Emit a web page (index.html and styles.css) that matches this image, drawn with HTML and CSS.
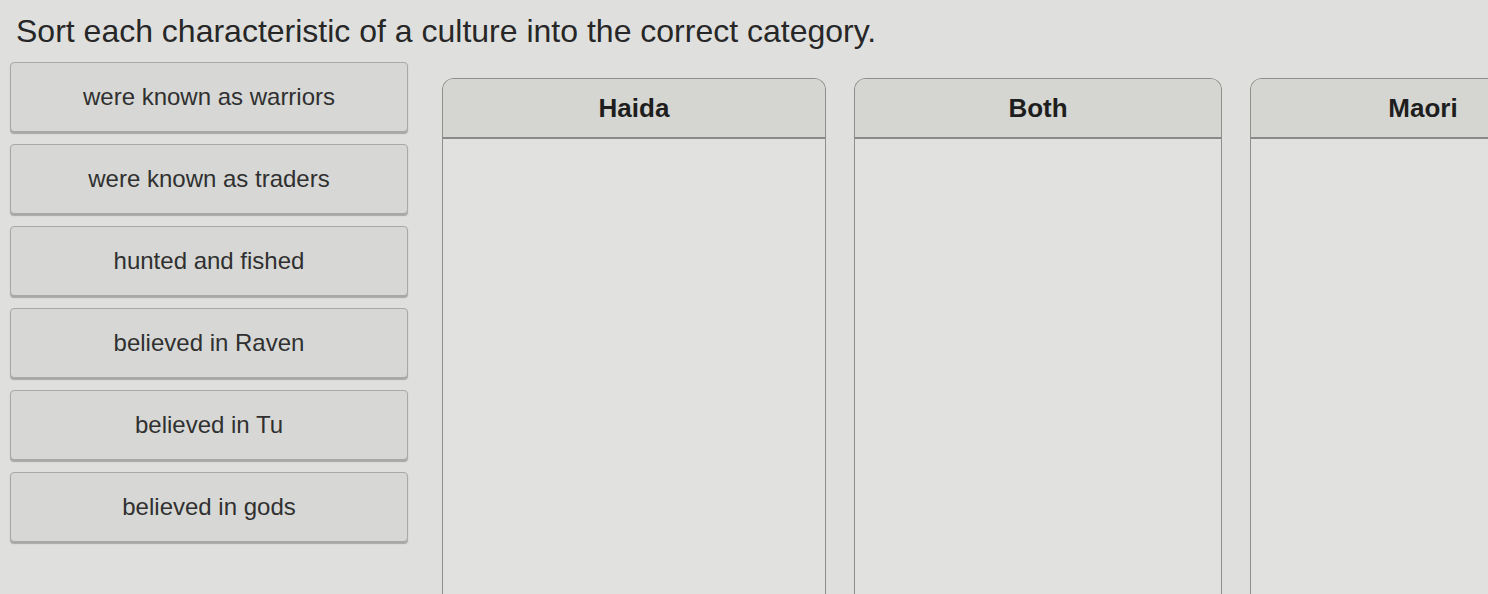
FILE: index.html
```html
<!DOCTYPE html>
<html lang="en">
<head>
<meta charset="utf-8">
<title>Sort the characteristics</title>
<link rel="stylesheet" href="styles.css">
</head>
<body>
<main class="page">
  <h1 class="prompt">Sort each characteristic of a culture into the correct category.</h1>
  <div class="board">
    <ul class="bank">
      <li class="chip">were known as warriors</li>
      <li class="chip">were known as traders</li>
      <li class="chip">hunted and fished</li>
      <li class="chip">believed in Raven</li>
      <li class="chip">believed in Tu</li>
      <li class="chip">believed in gods</li>
    </ul>
    <div class="bins">
      <section class="bin">
        <header class="bin-head">Haida</header>
        <div class="bin-body"></div>
      </section>
      <section class="bin bin-mid">
        <header class="bin-head">Both</header>
        <div class="bin-body"></div>
      </section>
      <section class="bin bin-last">
        <header class="bin-head">Maori</header>
        <div class="bin-body"></div>
      </section>
    </div>
  </div>
</main>
</body>
</html>
```

FILE: styles.css
```css
html, body {
  margin: 0;
  padding: 0;
  height: 100%;
  overflow: hidden;
}

body {
  background: #dfe0dd;
  font-family: "Liberation Sans", Arial, sans-serif;
  color: #333;
}

.page {
  display: flex;
  flex-direction: column;
  height: 100%;
}

.prompt {
  margin: 0;
  padding: 12px 0 0 16px;
  font-size: 32px;
  line-height: 38px;
  font-weight: normal;
  color: #272727;
  white-space: nowrap;
}

.board {
  display: flex;
  flex: 1;
  margin-top: 12px;
  min-height: 0;
}

.bank {
  list-style: none;
  margin: 0 0 0 10px;
  padding: 0;
  width: 398px;
  flex: none;
  display: flex;
  flex-direction: column;
  gap: 12px;
}

.chip {
  height: 68px;
  display: flex;
  align-items: center;
  justify-content: center;
  background: #d7d8d6;
  border: 1px solid #a8a9a7;
  border-radius: 4px;
  box-shadow: 0 2px 1px rgba(0, 0, 0, 0.25);
  font-size: 24px;
  color: #303030;
}

.bins {
  display: flex;
  gap: 28px;
  margin-left: 34px;
  margin-top: 16px;
  flex: none;
}

.bin {
  width: 382px;
  flex: none;
  display: flex;
  flex-direction: column;
  border: 1px solid #8e8f8d;
  border-bottom: none;
  border-radius: 12px 12px 0 0;
  background: #e1e2df;
}

.bin-mid {
  width: 366px;
}

.bin-last {
  width: 344px;
}

.bin-head {
  height: 58px;
  display: flex;
  align-items: center;
  justify-content: center;
  background: #d5d6d1;
  border-bottom: 2px solid #8a8b88;
  border-radius: 11px 11px 0 0;
  font-size: 26px;
  font-weight: bold;
  color: #1e1e1e;
}

.bin-body {
  flex: 1;
}
```
